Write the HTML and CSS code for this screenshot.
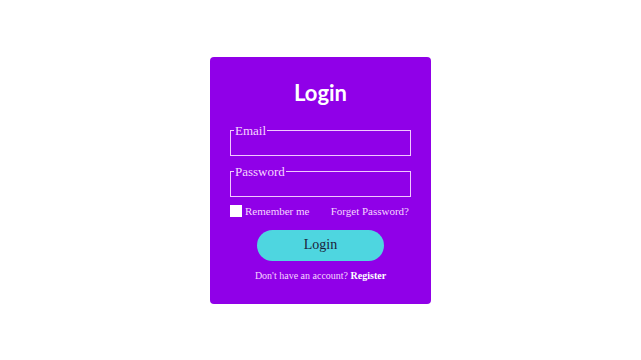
FILE: index.html
```html
<!DOCTYPE html>
<html lang="en">
<head>
    <meta charset="UTF-8">
    <meta name="viewport" content="width=device-width, initial-scale=1.0">
    <title>Login</title>
    <link rel="stylesheet" href="styles.css">
</head>
<body>
    <form class="login-box">
        <h1>Login</h1>
        <fieldset>
            <legend>Email</legend>
            <input type="email">
        </fieldset>
        <fieldset>
            <legend>Password</legend>
            <input type="password">
        </fieldset>
        <div class="options">
            <label><input type="checkbox" class="check"> Remember me</label>
            <a href="#">Forget Password?</a>
        </div>
        <button type="submit">Login</button>
        <p class="register">Don't have an account? <a href="#">Register</a></p>
    </form>
</body>
</html>
```

FILE: styles.css
```css
* {
    margin: 0;
    padding: 0;
    box-sizing: border-box;
}
body {
    height: 100vh;
    display: flex;
    align-items: center;
    justify-content: center;
    background-color: #ffffff;
    font-family: "Liberation Serif", serif;
}
.login-box {
    width: 221px;
    height: 247px;
    padding: 22px 20px 0;
    background-color: #9000e8;
    border-radius: 4px;
    color: #f6d6ff;
    display: flex;
    flex-direction: column;
}
h1 {
    font-family: Lato, sans-serif;
    font-size: 22px;
    font-weight: bold;
    color: #ffffff;
    text-align: center;
    margin-bottom: 17px;
}
fieldset {
    border: 1px solid #f2c8ff;
    padding: 0 3px;
    margin-bottom: 8px;
}
legend {
    font-size: 13px;
    padding: 0 1px;
    line-height: 15px;
}
fieldset input {
    display: block;
    width: 100%;
    height: 17px;
    border: none;
    outline: none;
    background: transparent;
    color: #ffffff;
}
.options {
    display: flex;
    justify-content: space-between;
    align-items: center;
    font-size: 11px;
}
.options label {
    display: flex;
    align-items: center;
    gap: 3px;
}
.check {
    appearance: none;
    width: 12px;
    height: 12px;
    background: #ffffff;
    margin: 0;
}
.options a {
    color: #f6d6ff;
    text-decoration: none;
    margin-right: 2px;
}
button {
    align-self: center;
    width: 127px;
    height: 31px;
    margin-top: 13px;
    border: none;
    border-radius: 16px;
    background-color: #4ed6e0;
    color: #1d1d3a;
    font-family: "Liberation Serif", serif;
    font-size: 14px;
    cursor: pointer;
}
.register {
    text-align: center;
    font-size: 10px;
    margin-top: 9px;
}
.register a {
    color: #ffffff;
    font-weight: bold;
    text-decoration: none;
}
```
